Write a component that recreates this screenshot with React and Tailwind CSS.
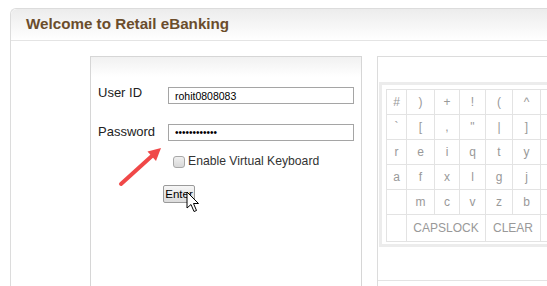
import React from "react";

const rows = [
  ["#", ")", "+", "!", "(", "^", ""],
  ["`", "[", ",", "\"", "|", "]", ""],
  ["r", "e", "i", "q", "t", "y", ""],
  ["a", "f", "x", "l", "g", "j", ""],
  ["", "m", "c", "v", "z", "b", ""],
];

export default function App() {
  return (
    <div className="relative w-[547px] h-[286px] overflow-hidden bg-white font-['Liberation_Sans',Arial,sans-serif]">
      <div className="ml-[10px] mt-[8px] h-[320px] border-l border-t border-[#dcdcdc] rounded-tl-[6px]">
        {/* header */}
        <div className="h-[32px] rounded-tl-[6px] bg-gradient-to-b from-[#ececec] to-white border-b border-[#e4e4e4] pl-[15px] pt-[6px]">
          <h1 className="text-[15.2px] leading-[18px] font-bold text-[#6b4d2c]">Welcome to Retail eBanking</h1>
        </div>

        {/* body */}
        <div className="flex pl-[79px] pt-[15px] gap-[15px]">
          {/* login box */}
          <div className="shrink-0 w-[272px] h-[300px] border border-[#d6d6d6] bg-gradient-to-b from-[#f1f1f1] via-white to-white bg-[length:100%_40px] bg-no-repeat pt-[28px] pl-[7px] text-[#222]">
            <div className="flex items-start h-[18px]">
              <span className="w-[70px] text-[13px] leading-[15px]">User ID</span>
              <input
                readOnly
                value="rohit0808083"
                className="mt-[2px] w-[186px] h-[17px] border border-[#a5a5a5] pl-[6px] text-[10.5px] text-black outline-none"
              />
            </div>
            <div className="flex items-start h-[18px] mt-[19px]">
              <span className="w-[70px] text-[13px] leading-[15px] mt-[2px]">Password</span>
              <input
                readOnly
                type="password"
                value="rohit0808083"
                className="mt-[2px] w-[186px] h-[17px] border border-[#a5a5a5] pl-[6px] text-[10px] text-black outline-none"
              />
            </div>
            <div className="flex items-center ml-[75px] mt-[14px]">
              <span className="w-[12px] h-[12px] rounded-[3px] border border-[#a8a8a8] bg-gradient-to-b from-[#f0f0f0] to-[#d8d8d8]"></span>
              <span className="ml-[3px] text-[12.2px] leading-[15px] text-[#333]">Enable Virtual Keyboard</span>
            </div>
            <div className="ml-[65px] mt-[16px]">
              <button className="w-[32px] h-[18px] border border-[#9a9a9a] rounded-[2px] bg-gradient-to-b from-[#f6f6f6] to-[#dcdcdc] text-[11.5px] leading-[14px] text-black flex items-center justify-center">
                Enter
              </button>
            </div>
          </div>

          {/* keyboard panel */}
          <div className="flex-1 h-[300px] border-l border-t border-[#dcdcdc]">
            <div className="ml-[1px] mt-[25px] border-l-[3px] border-t-[3px] border-b-[3px] border-[#ececec] pl-[4px] pt-[4px] pb-[2px]">
              <div className="grid grid-cols-[20px_28px_25px_26px_27px_28px_40px] border-l border-t border-[#e3e3e3] text-[12px] text-[#999999]">
                {rows.map((r, i) =>
                  r.map((c, j) => (
                    <div
                      key={i + "-" + j}
                      className="h-[25px] border-r border-b border-[#e3e3e3] flex items-center justify-center"
                    >
                      {c}
                    </div>
                  ))
                )}
                <div className="h-[27px] border-r border-b border-[#e3e3e3]"></div>
                <div className="col-span-3 h-[27px] border-r border-b border-[#e3e3e3] flex items-center justify-center">CAPSLOCK</div>
                <div className="col-span-2 h-[27px] border-r border-b border-[#e3e3e3] flex items-center justify-center">CLEAR</div>
                <div className="h-[27px] border-r border-b border-[#e3e3e3]"></div>
              </div>
            </div>
            <div className="h-[34px] border-b border-[#e3e3e3]"></div>
          </div>
        </div>
      </div>

      {/* red annotation arrow */}
      <svg className="absolute left-0 top-0 pointer-events-none" width="547" height="286">
        <line x1="121" y1="184" x2="153" y2="155" stroke="#f04848" strokeWidth="4" strokeLinecap="round" />
        <polygon points="161,148 156,161 147.5,151.5" fill="#f04848" />
      </svg>

      {/* mouse cursor */}
      <svg className="absolute left-[186px] top-[191px] pointer-events-none" width="14" height="22" viewBox="0 0 14 22">
        <path d="M1 1 L1 17 L5 13.5 L8 20.5 L10.5 19.5 L7.5 12.5 L12.5 12.5 Z" fill="white" stroke="black" strokeWidth="1" strokeLinejoin="miter" />
      </svg>
    </div>
  );
}
